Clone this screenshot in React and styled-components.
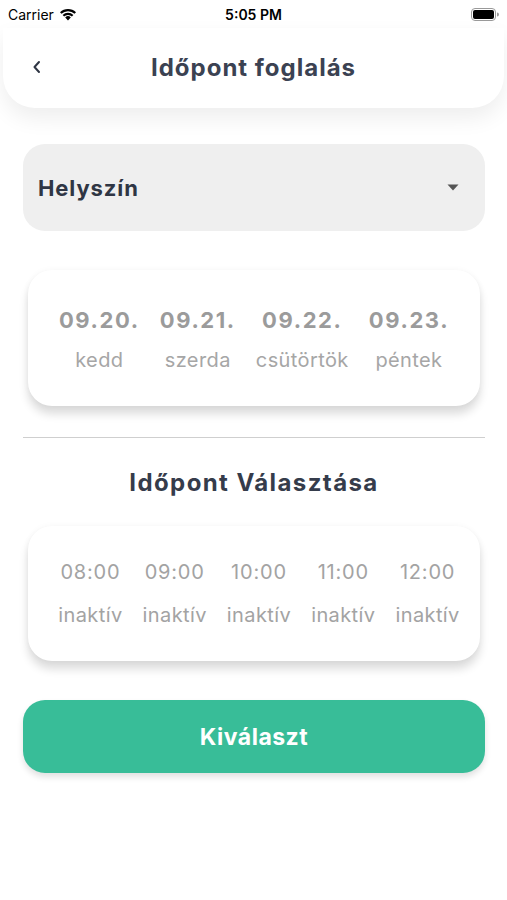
import React from "react";
import styled, { createGlobalStyle } from "styled-components";

const GlobalStyle = createGlobalStyle`
  * {
    box-sizing: border-box;
  }
  body {
    margin: 0;
    background: #ffffff;
    font-family: Inter, "Liberation Sans", sans-serif;
  }
`;

const DAYS = [
  { date: "09.20.", name: "kedd" },
  { date: "09.21.", name: "szerda" },
  { date: "09.22.", name: "csütörtök" },
  { date: "09.23.", name: "péntek" },
];

const HOURS = ["08:00", "09:00", "10:00", "11:00", "12:00"];

const App = () => {
  return (
    <Screen>
      <GlobalStyle />
      <StatusBar>
        <Carrier>
          Carrier
          <svg width="18" height="13" viewBox="0 0 18 13">
            <path d="M9 12.5 L6.2 9.4 A4 4 0 0 1 11.8 9.4 Z" fill="#000" />
            <path d="M3.6 6.9 A7.6 7.6 0 0 1 14.4 6.9 L12.9 8.5 A5.5 5.5 0 0 0 5.1 8.5 Z" fill="#000" />
            <path d="M1 4.2 A11.4 11.4 0 0 1 17 4.2 L15.5 5.8 A9.3 9.3 0 0 0 2.5 5.8 Z" fill="#000" />
          </svg>
        </Carrier>
        <Clock>5:05 PM</Clock>
        <Battery>
          <svg width="28" height="13" viewBox="0 0 28 13">
            <rect x="0.5" y="0.5" width="24" height="12" rx="3.5" fill="none" stroke="#999" />
            <rect x="2" y="2" width="21" height="9" rx="2" fill="#000" />
            <path d="M26 4.5 A2 2 0 0 1 26 8.5 Z" fill="#999" />
          </svg>
        </Battery>
      </StatusBar>

      <Header>
        <BackButton>
          <svg width="12" height="16" viewBox="0 0 12 16">
            <path d="M8 3 L3.5 8 L8 13" fill="none" stroke="#2f3644" strokeWidth="2" strokeLinecap="round" strokeLinejoin="round" />
          </svg>
        </BackButton>
        <Title>Időpont foglalás</Title>
        <span />
      </Header>

      <Content>
        <Select>
          <SelectLabel>Helyszín</SelectLabel>
          <svg width="12" height="7" viewBox="0 0 12 7">
            <path d="M0.5 0.5 L11.5 0.5 L6 6.5 Z" fill="#555" />
          </svg>
        </Select>

        <Card $top={39} $padTop={36} $padBottom={34} $padLeft={0}>
          <ItemRow>
            {DAYS.map((d) => (
              <Column key={d.date}>
                <DateText>{d.date}</DateText>
                <DayText>{d.name}</DayText>
              </Column>
            ))}
          </ItemRow>
        </Card>

        <Divider />

        <SectionTitle>Időpont Választása</SectionTitle>

        <Card $top={28} $padTop={34} $padBottom={34} $padLeft={10}>
          <ItemRow>
            {HOURS.map((h) => (
              <Column key={h}>
                <HourText>{h}</HourText>
                <StateText>inaktív</StateText>
              </Column>
            ))}
          </ItemRow>
        </Card>

        <Button>Kiválaszt</Button>
      </Content>
    </Screen>
  );
};

export default App;

const Screen = styled.div`
  width: 507px;
  min-height: 900px;
  background: #ffffff;
  overflow: hidden;
`;

const StatusBar = styled.div`
  height: 28px;
  display: grid;
  grid-template-columns: 1fr auto 1fr;
  align-items: center;
  padding: 0 8px;
  font-size: 14px;
  color: #000;
`;

const Carrier = styled.div`
  display: flex;
  align-items: center;
  gap: 5px;
  font-weight: 400;
`;

const Clock = styled.div`
  font-weight: 600;
`;

const Battery = styled.div`
  display: flex;
  justify-content: flex-end;
`;

const Header = styled.div`
  height: 80px;
  margin: 0 3px;
  display: grid;
  grid-template-columns: 1fr auto 1fr;
  align-items: center;
  background: #ffffff;
  border-radius: 0 0 32px 32px;
  box-shadow: 0 10px 22px rgba(0, 0, 0, 0.07);
  padding: 0 28px 2px;
`;

const BackButton = styled.div`
  display: flex;
  align-items: center;
`;

const Title = styled.h1`
  margin: 0;
  font-size: 24px;
  font-weight: 700;
  color: #3b4252;
  letter-spacing: 1px;
`;

const Content = styled.div`
  padding: 36px 22px 40px 23px;
  display: flex;
  flex-direction: column;
`;

const Select = styled.div`
  height: 87px;
  display: flex;
  align-items: center;
  justify-content: space-between;
  padding: 0 26px 0 15px;
  background: #efefef;
  border-radius: 22px;
`;

const SelectLabel = styled.span`
  font-size: 22px;
  font-weight: 700;
  color: #2f3644;
  letter-spacing: 0.9px;
`;

const Card = styled.div`
  margin: ${(p) => p.$top}px 5px 0;
  padding: ${(p) => p.$padTop}px 0 ${(p) => p.$padBottom}px ${(p) => p.$padLeft}px;
  background: #ffffff;
  border-radius: 24px;
  box-shadow: 0 8px 10px rgba(0, 0, 0, 0.14), 0 0 6px rgba(0, 0, 0, 0.04);
`;

const ItemRow = styled.div`
  display: flex;
  justify-content: center;
  gap: 20px;
`;

const Column = styled.div`
  display: flex;
  flex-direction: column;
  align-items: center;
`;

const DateText = styled.span`
  font-size: 22px;
  font-weight: 700;
  color: #9b9b9b;
  letter-spacing: 1.6px;
  line-height: 28px;
`;

const DayText = styled.span`
  margin-top: 14px;
  font-size: 20px;
  color: #a6a6a6;
  letter-spacing: 0.4px;
  line-height: 24px;
`;

const HourText = styled.span`
  font-size: 20px;
  font-weight: 400;
  color: #a3a3a3;
  letter-spacing: 0.8px;
  line-height: 24px;
`;

const StateText = styled.span`
  margin-top: 19px;
  font-size: 20px;
  color: #a3a3a3;
  letter-spacing: 0.4px;
  line-height: 24px;
`;

const Divider = styled.hr`
  margin: 31px 0 0;
  border: none;
  border-top: 1px solid #cfcfcf;
`;

const SectionTitle = styled.h2`
  margin: 30px 0 0;
  text-align: center;
  font-size: 24px;
  font-weight: 700;
  color: #353c4b;
  letter-spacing: 1.4px;
  line-height: 30px;
`;

const Button = styled.button`
  margin-top: 39px;
  height: 73px;
  border: none;
  border-radius: 22px;
  background: #38bd98;
  color: #ffffff;
  font-family: Inter, "Liberation Sans", sans-serif;
  font-size: 23px;
  font-weight: 700;
  letter-spacing: 0.5px;
  box-shadow: 0 4px 6px rgba(0, 0, 0, 0.12);
`;
